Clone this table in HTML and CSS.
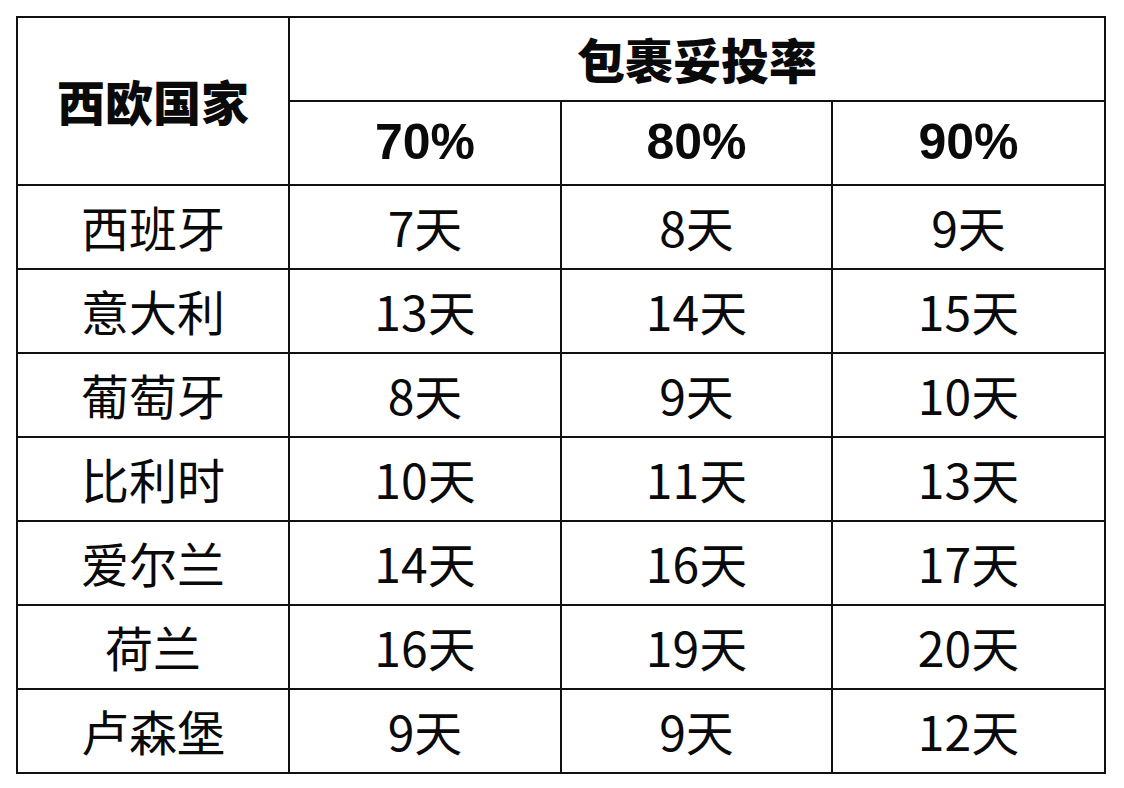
FILE: index.html
```html
<!DOCTYPE html>
<html lang="zh-CN">
<head>
<meta charset="utf-8">
<title>西欧国家包裹妥投率</title>
<link rel="stylesheet" href="styles.css">
</head>
<body>
<div class="page">
<table class="grid">
  <colgroup><col class="c1"><col class="c2"><col class="c3"><col class="c4"></colgroup>
  <thead>
    <tr class="row">
      <th class="head-cn" rowspan="2">西欧国家</th>
      <th class="head-cn" colspan="3">包裹妥投率</th>
    </tr>
    <tr class="row">
      <th class="head-num">70%</th>
      <th class="head-num">80%</th>
      <th class="head-num">90%</th>
    </tr>
  </thead>
  <tbody>
    <tr class="row"><td>西班牙</td><td>7天</td><td>8天</td><td>9天</td></tr>
    <tr class="row"><td>意大利</td><td>13天</td><td>14天</td><td>15天</td></tr>
    <tr class="row"><td>葡萄牙</td><td>8天</td><td>9天</td><td>10天</td></tr>
    <tr class="row"><td>比利时</td><td>10天</td><td>11天</td><td>13天</td></tr>
    <tr class="row"><td>爱尔兰</td><td>14天</td><td>16天</td><td>17天</td></tr>
    <tr class="row"><td>荷兰</td><td>16天</td><td>19天</td><td>20天</td></tr>
    <tr class="row"><td>卢森堡</td><td>9天</td><td>9天</td><td>12天</td></tr>
  </tbody>
</table>
</div>
</body>
</html>
```
FILE: styles.css
```css
html, body {
  margin: 0;
  padding: 0;
  background: #ffffff;
}
.page {
  padding: 16px 0 0 16px;
}
.grid {
  border-collapse: collapse;
  table-layout: fixed;
  width: 1088px;
  color: #0a0a0a;
  font-family: "Noto Sans CJK SC", "Open Sans", sans-serif;
}
.c1 { width: 272px; }
.c2 { width: 272px; }
.c3 { width: 271px; }
.c4 { width: 273px; }
.row { height: 84px; }
.grid th, .grid td {
  border: 2px solid #111111;
  text-align: center;
  vertical-align: middle;
  padding: 0 0 2px 0;
  line-height: 1;
}
.grid td {
  font-size: 48px;
  font-weight: 400;
}
.head-cn {
  font-size: 48px;
  font-weight: 900;
}
.head-num {
  font-family: "Liberation Sans", Arial, sans-serif;
  font-size: 50px;
  font-weight: 700;
  padding: 4px 0 0 0;
}
```
